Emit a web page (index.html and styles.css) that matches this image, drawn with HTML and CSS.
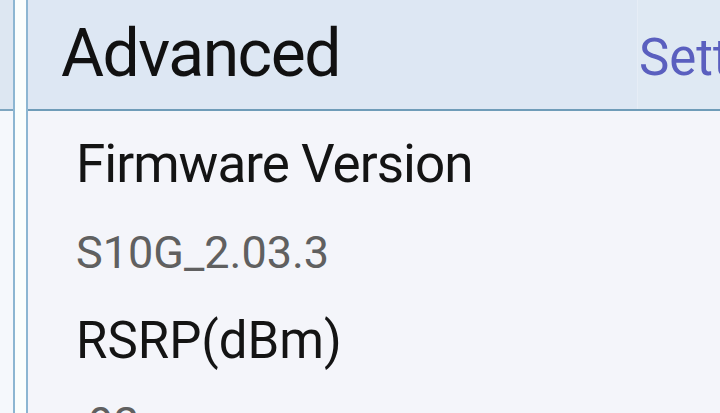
FILE: index.html
```html
<!DOCTYPE html>
<html>
<head>
<meta charset="utf-8">
<link rel="stylesheet" href="styles.css">
</head>
<body>
<div class="screen">
  <div class="side">
    <div class="side-head"></div>
  </div>
  <div class="gap"></div>
  <div class="main">
    <div class="head">
      <div class="title">Advanced</div>
      <div class="tab">Settings</div>
    </div>
    <div class="list">
      <div class="item">
        <div class="label">Firmware Version</div>
        <div class="value">S10G_2.03.3</div>
      </div>
      <div class="item">
        <div class="label">RSRP(dBm)</div>
        <div class="value">-92</div>
      </div>
    </div>
  </div>
</div>
</body>
</html>
```
FILE: styles.css
```css
html, body {
  margin: 0;
  padding: 0;
  width: 720px;
  height: 413px;
  overflow: hidden;
  background: #f4f5fa;
  font-family: Roboto, "Liberation Sans", sans-serif;
}
.screen {
  display: flex;
  height: 413px;
}
.side {
  width: 13px;
  flex: none;
  background: #f5f8fc;
  border-right: 2px solid #8cb6d2;
}
.side-head {
  height: 109px;
  background: #dde7f2;
  border-bottom: 2px solid #7ea6c0;
}
.gap {
  width: 11px;
  flex: none;
  background: #fafefd;
}
.main {
  flex: 1;
  border-left: 2px solid #8cb6d2;
  overflow: hidden;
}
.head {
  height: 109px;
  background: #dde7f3;
  border-bottom: 2px solid #6f9cb8;
  display: flex;
  white-space: nowrap;
}
.title {
  font-size: 66px;
  letter-spacing: -1.5px;
  color: #111;
  padding-left: 33px;
  padding-top: 21px;
  width: 576px;
  flex: none;
  line-height: 1;
}
.tab {
  font-size: 51px;
  color: #5a5fbf;
  padding-left: 1px;
  padding-top: 32px;
  flex: none;
  line-height: 1;
  border-left: 1px solid #e6edf6;
  background: #dfe9f3;
}
.list {
  padding-left: 48px;
  padding-top: 27px;
}
.item {
  display: flex;
  flex-direction: column;
}
.label {
  font-size: 53px;
  letter-spacing: -1px;
  color: #141414;
  line-height: 1;
  height: 92px;
}
.item + .item .label {
  font-size: 51px;
  letter-spacing: 0;
  height: 86px;
}
.value {
  font-size: 45px;
  color: #606060;
  line-height: 1;
  height: 85px;
}
```
